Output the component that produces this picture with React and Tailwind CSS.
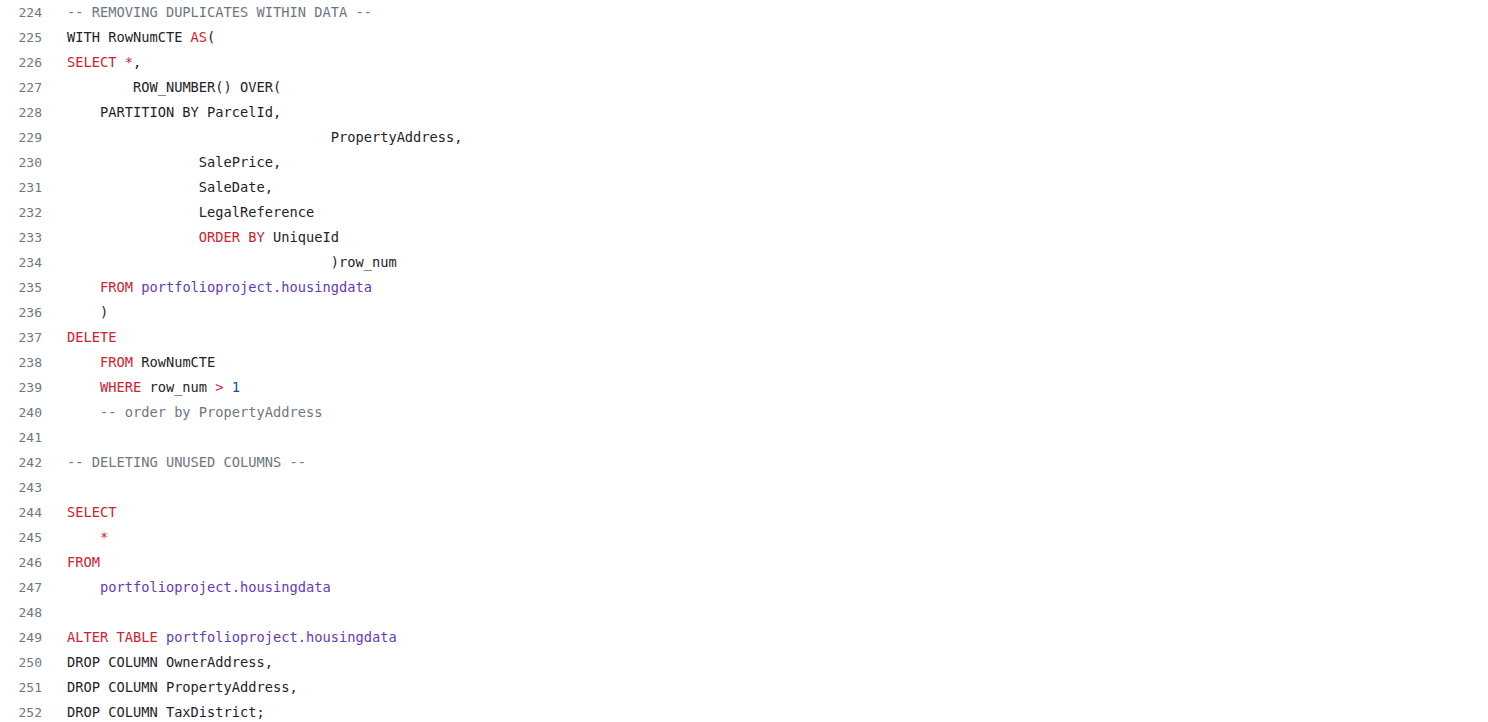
import React from "react";

const K = ({ children }) => <span className="text-[#cf222e]">{children}</span>;
const P = ({ children }) => <span className="text-[#6639ba]">{children}</span>;
const C = ({ children }) => <span className="text-[#6e7781]">{children}</span>;
const N = ({ children }) => <span className="text-[#0550ae]">{children}</span>;

const sp = (n) => " ".repeat(n);

const lines = [
  <C>-- REMOVING DUPLICATES WITHIN DATA --</C>,
  <>WITH RowNumCTE <K>AS</K>(</>,
  <><K>SELECT</K> <K>*</K>,</>,
  <>{sp(8)}ROW_NUMBER() OVER(</>,
  <>{sp(4)}PARTITION BY ParcelId,</>,
  <>{sp(32)}PropertyAddress,</>,
  <>{sp(16)}SalePrice,</>,
  <>{sp(16)}SaleDate,</>,
  <>{sp(16)}LegalReference</>,
  <>{sp(16)}<K>ORDER BY</K> UniqueId</>,
  <>{sp(32)})row_num</>,
  <>{sp(4)}<K>FROM</K> <P>portfolioproject.housingdata</P></>,
  <>{sp(4)})</>,
  <><K>DELETE</K></>,
  <>{sp(4)}<K>FROM</K> RowNumCTE</>,
  <>{sp(4)}<K>WHERE</K> row_num <K>&gt;</K> <N>1</N></>,
  <>{sp(4)}<C>-- order by PropertyAddress</C></>,
  <></>,
  <C>-- DELETING UNUSED COLUMNS --</C>,
  <></>,
  <><K>SELECT</K></>,
  <>{sp(4)}<K>*</K></>,
  <><K>FROM</K></>,
  <>{sp(4)}<P>portfolioproject.housingdata</P></>,
  <></>,
  <><K>ALTER</K> <K>TABLE</K> <P>portfolioproject.housingdata</P></>,
  <>DROP COLUMN OwnerAddress,</>,
  <>DROP COLUMN PropertyAddress,</>,
  <>DROP COLUMN TaxDistrict;</>,
];

export default function App() {
  return (
    <div
      className="w-[1488px] h-[722px] overflow-hidden bg-white text-[#1f2328] text-[13.7px]"
      style={{ fontFamily: '"DejaVu Sans Mono", "Liberation Mono", monospace' }}
    >
      {lines.map((content, i) => (
        <div key={i} className="flex h-[25px] leading-[25px]">
          <div className="w-[42px] shrink-0 text-right text-[#6e7781] text-[13px]">
            {224 + i}
          </div>
          <div className="pl-[25px] whitespace-pre">{content}</div>
        </div>
      ))}
    </div>
  );
}
